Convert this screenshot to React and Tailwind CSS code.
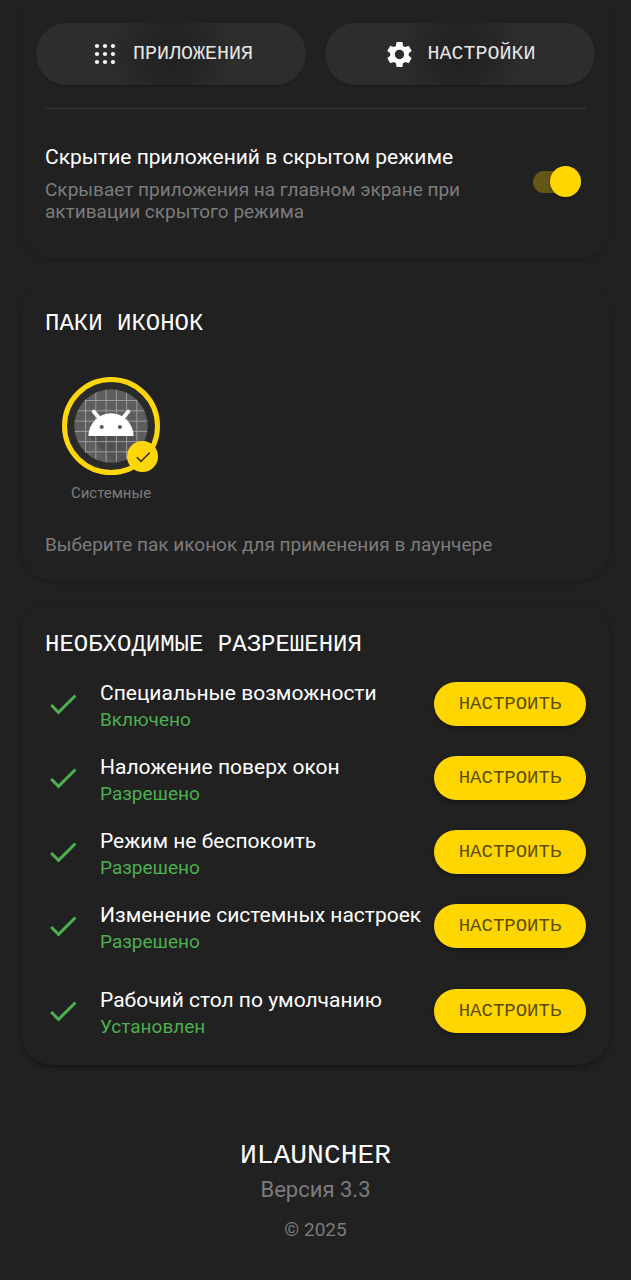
import { useState } from "react";
import { MdCheck, MdSettings } from "react-icons/md";

const permissions = [
  { title: "Специальные возможности", status: "Включено" },
  { title: "Наложение поверх окон", status: "Разрешено" },
  { title: "Режим не беспокоить", status: "Разрешено" },
  { title: "Изменение системных настроек", status: "Разрешено" },
  { title: "Рабочий стол по умолчанию", status: "Установлен", spaced: true },
];

function DotsIcon() {
  const steps = [8, 16, 24];
  return (
    <svg viewBox="0 0 32 32" className="size-8" fill="currentColor" aria-hidden="true">
      {steps.map((y) => steps.map((x) => <circle key={`${x}-${y}`} cx={x} cy={y} r="2.1" />))}
    </svg>
  );
}

function AndroidIcon() {
  const lines = [23.5, 33.8, 44.1, 54.4, 64.6, 74.8];
  return (
    <svg viewBox="0 0 98 98" className="size-[98px]" aria-hidden="true">
      <defs>
        <clipPath id="disc">
          <circle cx="49" cy="49" r="36.7" />
        </clipPath>
        <linearGradient id="shade" x1="0" y1="0" x2="1" y2="1">
          <stop offset="0" stopColor="#4c4c4c" />
          <stop offset="1" stopColor="#5c5c5c" />
        </linearGradient>
      </defs>
      <circle cx="49" cy="49" r="46.5" fill="#2a2a2a" stroke="#ffd60a" strokeWidth="5" />
      <g clipPath="url(#disc)">
        <rect width="98" height="98" fill="#5e5e5e" />
        <path d="M26.5 59 L71.5 59 L98 86 V98 H65 Z" fill="url(#shade)" />
        {lines.map((p) => (
          <path key={p} d={`M${p} 0V98M0 ${p}H98`} stroke="#a3a3a3" strokeWidth="0.9" />
        ))}
      </g>
      <g fill="#fff">
        <path d="M26.5 59A22.5 22.7 0 0 1 71.5 59Z" />
        <path d="M31.6 34.6L39 43M66.4 34.6L59 43" stroke="#fff" strokeWidth="3.8" strokeLinecap="round" />
      </g>
      <circle cx="39.7" cy="50" r="2.1" fill="#5e5e5e" />
      <circle cx="57.9" cy="50" r="2.1" fill="#5e5e5e" />
    </svg>
  );
}

function TabButton({ icon, children }) {
  return (
    <button
      type="button"
      className="flex h-[62px] flex-1 items-center justify-center gap-3 rounded-full bg-[radial-gradient(circle_at_center,#212121_0px,#242424_24px,#2d2d2d_64px)] font-['Liberation_Mono',monospace] text-xl text-[#e6e6e6] shadow-[0_1px_2px_rgba(0,0,0,0.25)]"
    >
      <span className="text-white">{icon}</span>
      {children}
    </button>
  );
}

function Heading({ children }) {
  return <h2 className="font-['Liberation_Mono',monospace] text-2xl leading-8 text-white">{children}</h2>;
}

export default function App() {
  const [hidden, setHidden] = useState(true);
  return (
    <div className="min-h-screen bg-[#212121] px-[21px] pb-8 font-[Roboto,sans-serif] text-white">
      <main className="flex flex-col gap-[22px]">
        <section className="rounded-b-[32px] px-6 pt-[23px] pb-9 shadow-[0_2px_4px_-1px_rgba(0,0,0,0.2)]">
          <div className="-mx-[9px] flex gap-[19px]">
            <TabButton icon={<DotsIcon />}>ПРИЛОЖЕНИЯ</TabButton>
            <TabButton icon={<MdSettings className="size-[31px]" />}>НАСТРОЙКИ</TabButton>
          </div>
          <hr className="mt-[23px] border-[#3b3b3b]" />
          <label className="mt-8 flex items-center justify-between gap-6">
            <span>
              <span className="block text-[21px] leading-8">Скрытие приложений в скрытом режиме</span>
              <span className="mt-[6px] block max-w-[430px] text-[19px] leading-[22px] text-[#7c7c7c]">
                Скрывает приложения на главном экране при активации скрытого режима
              </span>
            </span>
            <input
              type="checkbox"
              role="switch"
              checked={hidden}
              onChange={(e) => setHidden(e.target.checked)}
              className="relative mr-[5px] h-[22px] w-12 shrink-0 appearance-none rounded-full bg-[#555] after:absolute after:-top-[5px] after:left-0 after:size-[31px] after:rounded-full after:bg-[#bbb] after:shadow-[0_1px_3px_rgba(0,0,0,0.4)] checked:bg-[#645716] checked:after:left-[17px] checked:after:bg-[#ffd600]"
            />
          </label>
        </section>

        <section className="rounded-[32px] px-6 pt-[27px] pb-6 shadow-[0_2px_4px_-1px_rgba(0,0,0,0.25)]">
          <Heading>ПАКИ ИКОНОК</Heading>
          <button type="button" className="mt-[37px] ml-[17px] flex flex-col items-center" aria-pressed="true">
            <span className="relative">
              <AndroidIcon />
              <span className="absolute right-[2px] bottom-[3px] flex size-[31px] items-center justify-center rounded-full bg-[#ffd60a] text-[#332b00]">
                <svg viewBox="0 0 20 20" className="size-5" fill="none" stroke="currentColor" strokeWidth="1.5" aria-hidden="true">
                  <path d="M3.8 10.2L8 14.4L16.8 5.4" />
                </svg>
              </span>
            </span>
            <span className="mt-2 text-[15px] leading-5 text-[#7c7c7c]">Системные</span>
          </button>
          <p className="mt-[30px] text-[19px] leading-6 text-[#7c7c7c]">Выберите пак иконок для применения в лаунчере</p>
        </section>

        <section className="rounded-[32px] px-6 pt-[26px] pb-[29px] shadow-[0_2px_5px_-1px_rgba(0,0,0,0.5)]">
          <Heading>НЕОБХОДИМЫЕ РАЗРЕШЕНИЯ</Heading>
          <ul className="mt-[18px] flex flex-col gap-6">
            {permissions.map((p) => (
              <li key={p.title} className={`flex h-[50px] items-center justify-between ${p.spaced ? "mt-[11px]" : ""}`}>
                <div className="flex min-w-0 items-center gap-[19px]">
                  <MdCheck className="size-9 shrink-0 text-[#4caf50]" aria-hidden="true" />
                  <div className="min-w-0 pt-1 whitespace-nowrap">
                    <h3 className="text-[21px] leading-7">{p.title}</h3>
                    <p className="text-[19px] leading-[26px] text-[#4caf50]">{p.status}</p>
                  </div>
                </div>
                <button
                  type="button"
                  className="h-11 w-[152px] shrink-0 rounded-full bg-[#ffd600] font-['Liberation_Mono',monospace] text-[19px] text-[#5c4d00] shadow-[0_2px_4px_rgba(0,0,0,0.35)]"
                >
                  НАСТРОИТЬ
                </button>
              </li>
            ))}
          </ul>
        </section>
      </main>

      <footer className="mt-[73px] flex flex-col items-center text-[#7c7c7c]">
        <h1 className="font-['Liberation_Mono',monospace] text-[28px] leading-9 text-white">ИLAUNCHER</h1>
        <p className="text-[22px] leading-8">Версия 3.3</p>
        <p className="mt-3 text-[19px] leading-6">© 2025</p>
      </footer>
    </div>
  );
}
